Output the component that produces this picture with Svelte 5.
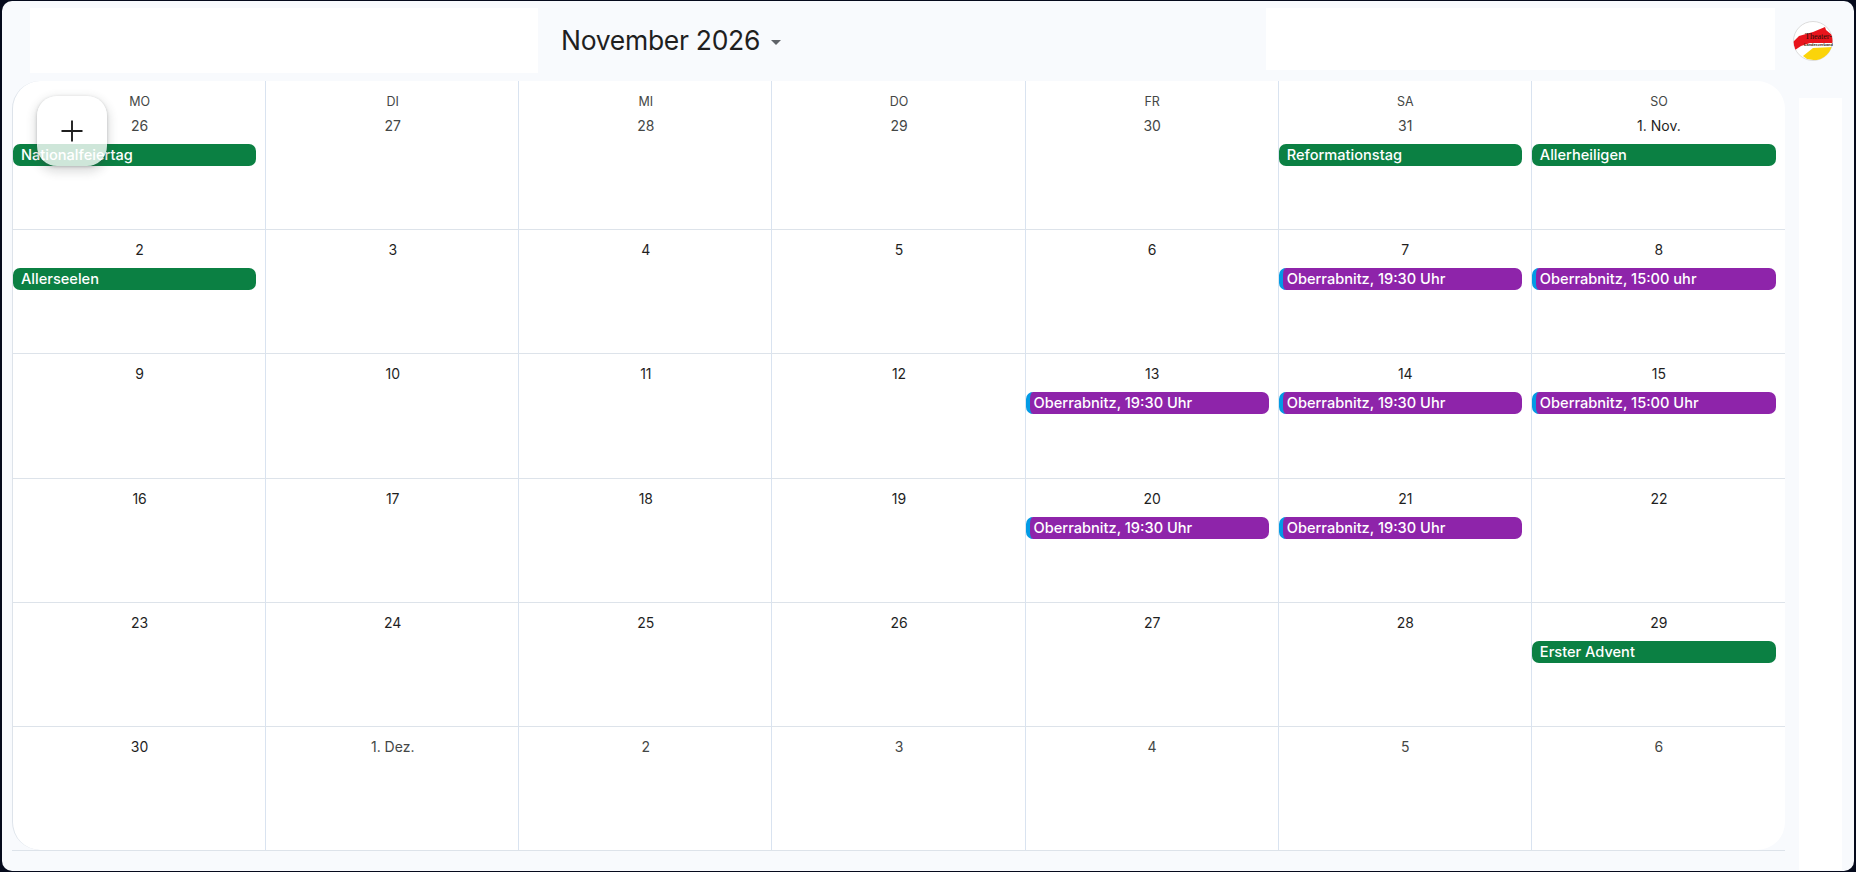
<script>
  // month grid: six weeks, monday first
  const weeks = [
    [
      { d: '26', muted: true, ev: { t: 'Nationalfeiertag', k: 'hol' } },
      { d: '27', muted: true },
      { d: '28', muted: true },
      { d: '29', muted: true },
      { d: '30', muted: true },
      { d: '31', muted: true, ev: { t: 'Reformationstag', k: 'hol' } },
      { d: '1. Nov.', ev: { t: 'Allerheiligen', k: 'hol' } },
    ],
    [
      { d: '2', ev: { t: 'Allerseelen', k: 'hol' } },
      { d: '3' },
      { d: '4' },
      { d: '5' },
      { d: '6' },
      { d: '7', ev: { t: 'Oberrabnitz, 19:30 Uhr', k: 'show' } },
      { d: '8', ev: { t: 'Oberrabnitz, 15:00 uhr', k: 'show' } },
    ],
    [
      { d: '9' },
      { d: '10' },
      { d: '11' },
      { d: '12' },
      { d: '13', ev: { t: 'Oberrabnitz, 19:30 Uhr', k: 'show' } },
      { d: '14', ev: { t: 'Oberrabnitz, 19:30 Uhr', k: 'show' } },
      { d: '15', ev: { t: 'Oberrabnitz, 15:00 Uhr', k: 'show' } },
    ],
    [
      { d: '16' },
      { d: '17' },
      { d: '18' },
      { d: '19' },
      { d: '20', ev: { t: 'Oberrabnitz, 19:30 Uhr', k: 'show' } },
      { d: '21', ev: { t: 'Oberrabnitz, 19:30 Uhr', k: 'show' } },
      { d: '22' },
    ],
    [
      { d: '23' },
      { d: '24' },
      { d: '25' },
      { d: '26' },
      { d: '27' },
      { d: '28' },
      { d: '29', ev: { t: 'Erster Advent', k: 'hol' } },
    ],
    [
      { d: '30' },
      { d: '1. Dez.', muted: true },
      { d: '2', muted: true },
      { d: '3', muted: true },
      { d: '4', muted: true },
      { d: '5', muted: true },
      { d: '6', muted: true },
    ],
  ]
  const days = ['MO', 'DI', 'MI', 'DO', 'FR', 'SA', 'SO']
</script>

<div class="screen">
  <div class="shell">
    <header class="top">
      <div class="blank left"></div>
      <div class="title">
        <span class="month">November 2026</span>
        <span class="caret"></span>
      </div>
      <div class="blank right"></div>
      <svg class="avatar" viewBox="0 0 40 40" width="40" height="40" aria-label="Theater-Landesverband">
        <defs><clipPath id="round"><circle cx="20" cy="20" r="19.5" /></clipPath></defs>
        <circle cx="20" cy="20" r="19.5" fill="#fff" stroke="#dcdcdc" />
        <g clip-path="url(#round)">
          <path d="M0 21 L6 15 L20 11 L32 6 L33 9 L39 14 L41 21 L41 22 L17 22 L8 25 L2 29Z" fill="#e8141c" />
          <path d="M10 35 L20 27 L41 26 L39 33 L27 40 L14 38Z" fill="#fbd40a" />
        </g>
        <text x="25.5" y="17.5" class="av1">Theater-</text>
        <text x="25.5" y="24.8" class="av2">Landesverband</text>
      </svg>
    </header>

    <div class="body">
      <div class="gridwrap">
        <main class="grid">
          {#each weeks as week, w}
            {#each week as cell, c}
              <div class="cell">
                {#if w === 0}<div class="dow">{days[c]}</div>{/if}
                <div class="date" class:muted={cell.muted}>{cell.d}</div>
                {#if cell.ev}
                  <div class="ev {cell.ev.k}">{cell.ev.t}</div>
                {/if}
              </div>
            {/each}
          {/each}
        </main>
      </div>
      <aside class="side"></aside>

      <button class="fab" aria-label="Erstellen">
        <svg viewBox="0 0 24 24" width="24" height="24"><path d="M12 1.5v21M1.5 12h21" fill="none" stroke="#1f1f1f" stroke-width="1.9" /></svg>
      </button>
    </div>
  </div>
</div>

<style>
  :global(body) { margin: 0; background: #050a1c; }
  .screen { width: 1856px; height: 872px; box-sizing: border-box; padding: 1px 2px 1px 2px; background: #050a1c; overflow: hidden; font-family: Inter, Roboto, "Liberation Sans", sans-serif; }
  .shell { height: 100%; background: #f8fafd; border-radius: 10px; display: flex; flex-direction: column; }

  .top { display: flex; align-items: flex-start; height: 80px; padding: 7px 0 0 28px; box-sizing: border-box; flex: none; }
  .blank { background: #fff; }
  .blank.left { width: 508px; height: 65px; }
  .title { width: 728px; height: 65px; display: flex; align-items: center; padding-left: 23px; box-sizing: border-box; gap: 11px; }
  .month { font-size: 26.5px; letter-spacing: -0.3px; color: #1f1f1f; line-height: 1; }
  .caret { width: 0; height: 0; border-left: 5.5px solid transparent; border-right: 5.5px solid transparent; border-top: 5px solid #5f6368; margin-top: 3px; }
  .blank.right { width: 509px; height: 62px; }
  .avatar { margin: 13px 0 0 18px; flex: none; }
  .av1 { font-family: "Liberation Serif", serif; font-size: 8px; text-anchor: middle; fill: #1a1208; }
  .av2 { font-family: "Liberation Sans", sans-serif; font-size: 3.9px; font-weight: 700; text-anchor: middle; fill: #2a2208; }

  .body { position: relative; display: flex; align-items: flex-start; padding-left: 10px; flex: 1; }
  .gridwrap { width: 1773px; height: 770px; border-bottom: 1px solid #dde3ea; box-sizing: border-box; flex: none; }
  .grid { height: 100%; display: grid; grid-template-columns: repeat(7, 1fr); grid-template-rows: 149px 124px 125px 124px 124px 1fr; background: #fff; border-radius: 28px; border-left: 1px solid #dde3ea; box-sizing: border-box; overflow: hidden; }
  .cell { border-right: 1px solid #d9e3f0; border-bottom: 1px solid #dde3ea; padding-top: 12px; box-sizing: border-box; min-width: 0; text-align: center; }
  .cell:nth-child(7n) { border-right: 0; }
  .cell:nth-last-child(-n+7) { border-bottom: 0; }
  .dow { font-size: 12.5px; line-height: 16px; margin-top: 1px; padding-left: 1px; color: #444746; margin-bottom: 8px; }
  .date { font-size: 14px; line-height: 16px; padding-left: 1px; color: #1f1f1f; }
  .date.muted { color: #444746; }
  .ev { height: 22px; line-height: 22px; margin: 10px 9px 0 0; padding-left: 8px; border-radius: 7px; font-size: 14.6px; font-weight: 500; color: #fff; text-align: left; white-space: nowrap; overflow: hidden; box-sizing: border-box; }
  .ev.hol { background: #0b8043; }
  .ev.show { background: #8e24aa; border-left: 4px solid #039be5; padding-left: 4px; }
  .side { width: 43px; height: 772px; margin: 17px 0 0 14px; background: #fff; flex: none; }

  .fab { position: absolute; left: 35px; top: 15px; width: 70px; height: 70px; border-radius: 20px; border: 0; padding: 0; background: rgba(255, 255, 255, 0.8); box-shadow: 0 1px 3px rgba(60, 64, 67, 0.3), 0 4px 8px 3px rgba(60, 64, 67, 0.15); display: flex; align-items: center; justify-content: center; }
</style>
